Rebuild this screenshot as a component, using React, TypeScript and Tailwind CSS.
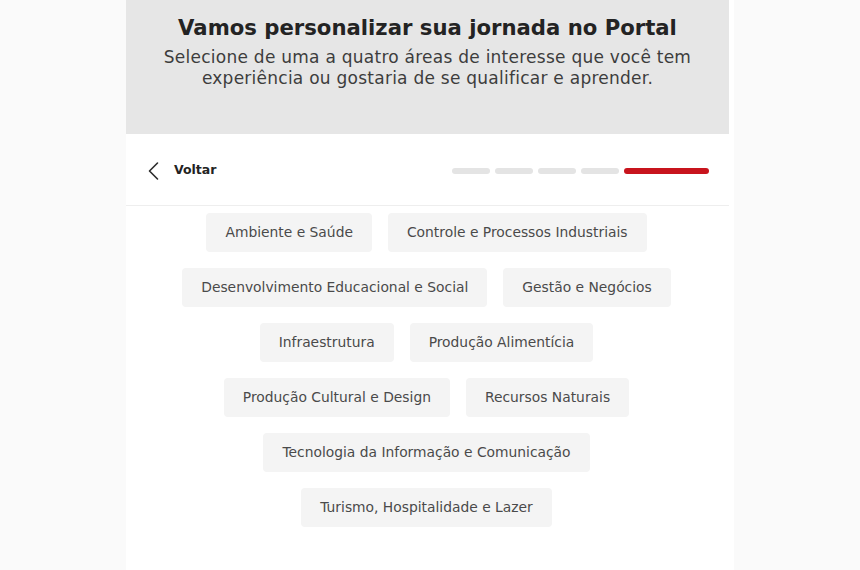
import React from "react";

const areas: string[] = [
  "Ambiente e Saúde",
  "Controle e Processos Industriais",
  "Desenvolvimento Educacional e Social",
  "Gestão e Negócios",
  "Infraestrutura",
  "Produção Alimentícia",
  "Produção Cultural e Design",
  "Recursos Naturais",
  "Tecnologia da Informação e Comunicação",
  "Turismo, Hospitalidade e Lazer",
];

const font = { fontFamily: '"DejaVu Sans", "Liberation Sans", sans-serif' };

export default function App() {
  return (
    <div className="min-h-screen w-full bg-[#fafafa]" style={font}>
      <div className="ml-[126px] flex min-h-screen w-[608px] bg-white">
        <div className="w-[603px]">
          {/* Header */}
          <div className="flex h-[134px] flex-col items-center bg-[#e6e6e6] pt-[14px] text-center">
            <h1 className="text-[21.2px] font-bold leading-[28px] text-[#232323]">
              Vamos personalizar sua jornada no Portal
            </h1>
            <p className="mt-[5px] text-[17px] leading-[20.6px] tracking-[0.25px] text-[#3d3d3d]">
              Selecione de uma a quatro áreas de interesse que você tem
              <br />
              experiência ou gostaria de se qualificar e aprender.
            </p>
          </div>

          {/* Back row */}
          <div className="flex h-[72px] items-center justify-between border-b border-[#eeeeee] pl-[22px] pr-[20px] pt-[2px]">
            <button className="flex items-center gap-[14px] text-[#232323]">
              <svg width="12" height="20" viewBox="0 0 12 20" fill="none">
                <polyline
                  points="9.5,2 1.5,10 9.5,18"
                  stroke="#2a2a2a"
                  strokeWidth="1.6"
                  strokeLinecap="round"
                  strokeLinejoin="round"
                />
              </svg>
              <span className="text-[12.5px] font-bold leading-none">Voltar</span>
            </button>
            <div className="flex items-center gap-[5px]">
              <div className="h-[6px] w-[38px] rounded-full bg-[#e4e4e4]" />
              <div className="h-[6px] w-[38px] rounded-full bg-[#e4e4e4]" />
              <div className="h-[6px] w-[38px] rounded-full bg-[#e4e4e4]" />
              <div className="h-[6px] w-[38px] rounded-full bg-[#e4e4e4]" />
              <div className="h-[6px] w-[85px] rounded-full bg-[#c8141d]" />
            </div>
          </div>

          {/* Chips */}
          <div className="flex flex-wrap justify-center gap-x-4 gap-y-4 pl-[39px] pr-[41px] pt-[7px]">
            {areas.map((a) => (
              <button
                key={a}
                className="flex h-[39px] items-center rounded-[4px] bg-[#f4f4f4] px-[19px] text-[13.85px] text-[#4a4a4a]"
              >
                {a}
              </button>
            ))}
          </div>
        </div>
      </div>
    </div>
  );
}
